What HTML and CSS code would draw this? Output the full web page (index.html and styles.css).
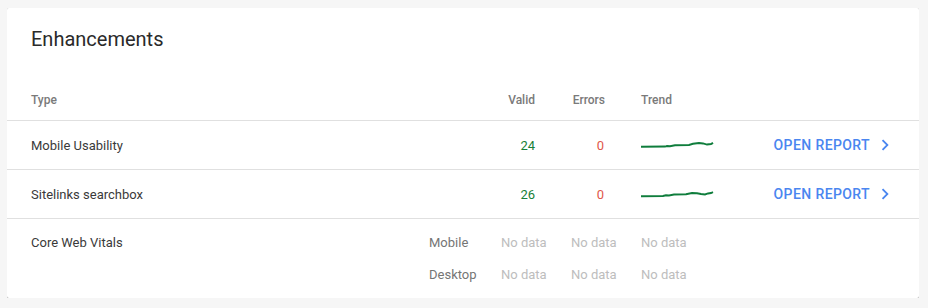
FILE: index.html
```html
<!DOCTYPE html>
<html>

<head>
    <title>Enhancements</title>
    <link rel="stylesheet" href="styles.css">
</head>

<body>
    <div class="card">
        <h2 class="card-title">Enhancements</h2>

        <div class="row head">
            <div>Type</div>
            <div></div>
            <div class="num">Valid</div>
            <div class="num">Errors</div>
            <div>Trend</div>
            <div></div>
        </div>

        <div class="row">
            <div class="type">Mobile Usability</div>
            <div></div>
            <div class="num valid">24</div>
            <div class="num errors">0</div>
            <div class="trend">
                <svg width="74" height="10" viewBox="0 0 74 10">
                    <polyline points="0,6.8 24,6.6 26,6.1 29,6.3 34,5.3 48,4.9 52,3.8 58,3 62,3.4 66,4.6 70,4.1 72,2.8" />
                </svg>
            </div>
            <a class="open" href="#">OPEN REPORT
                <svg width="22" height="22" viewBox="0 0 24 24"><path d="M10 6L8.59 7.41 13.17 12l-4.58 4.59L10 18l6-6z" /></svg>
            </a>
        </div>

        <div class="row">
            <div class="type">Sitelinks searchbox</div>
            <div></div>
            <div class="num valid">26</div>
            <div class="num errors">0</div>
            <div class="trend">
                <svg width="74" height="10" viewBox="0 0 74 10">
                    <polyline points="0,7.2 22,7 25,6.2 28,6.4 33,5.6 45,5.2 51,4 56,4.3 60,5 64,5.4 67,4.4 70,4.1 72,3.2" />
                </svg>
            </div>
            <a class="open" href="#">OPEN REPORT
                <svg width="22" height="22" viewBox="0 0 24 24"><path d="M10 6L8.59 7.41 13.17 12l-4.58 4.59L10 18l6-6z" /></svg>
            </a>
        </div>

        <div class="row vitals">
            <div class="type first">Core Web Vitals</div>
            <div class="device">Mobile</div>
            <div class="nodata">No data</div>
            <div class="nodata">No data</div>
            <div class="nodata">No data</div>
            <div class="device">Desktop</div>
            <div class="nodata">No data</div>
            <div class="nodata">No data</div>
            <div class="nodata">No data</div>
        </div>
    </div>
</body>
</html>
```

FILE: styles.css
```css
html {
    background-color: #f6f6f6;
}

body {
    margin: 8px 9px 0 7px;
    font-family: Roboto, 'Liberation Sans', sans-serif;
    color: #3a3a3a;
}

.card {
    background-color: #fff;
    border-radius: 2px;
    box-shadow: 0 1px 2px rgba(0, 0, 0, 0.3), 0 1px 3px 1px rgba(0, 0, 0, 0.12);
}

.card-title {
    margin: 0;
    padding: 19px 24px 29px;
    font-size: 20px;
    font-weight: 400;
    line-height: 24px;
    color: #2a2a2a;
}

.row {
    display: grid;
    grid-template-columns: 1fr 72px 70px 70px 132px 122px;
    align-items: center;
    height: 48px;
    padding: 0 24px;
    border-top: 1px solid #e0e0e0;
    font-size: 13px;
}

.row.head {
    height: 40px;
    border-top: none;
    font-size: 12px;
    font-weight: 500;
    color: #7a7a7a;
}

.num {
    text-align: right;
    padding-right: 36px;
}

.valid {
    color: #188038;
}

.errors {
    color: #e0574a;
    padding-right: 37px;
}

.trend svg {
    display: block;
}

.trend polyline {
    fill: none;
    stroke: #0f7d3c;
    stroke-width: 2;
}

.open {
    display: flex;
    align-items: center;
    justify-content: flex-end;
    gap: 4px;
    white-space: nowrap;
    font-size: 14px;
    font-weight: 500;
    letter-spacing: 0.4px;
    color: #4a86f0;
    text-decoration: none;
}

.open svg {
    flex-shrink: 0;
    fill: #4a86f0;
    margin-right: -1px;
}

.row.vitals {
    height: auto;
    grid-template-rows: 32px 32px;
    padding-top: 7px;
    padding-bottom: 8px;
}

.vitals .first {
    grid-column: 1;
    grid-row: 1;
}

.device {
    grid-column: 2;
    color: #757575;
}

.nodata {
    color: #bdbdbd;
}
```
